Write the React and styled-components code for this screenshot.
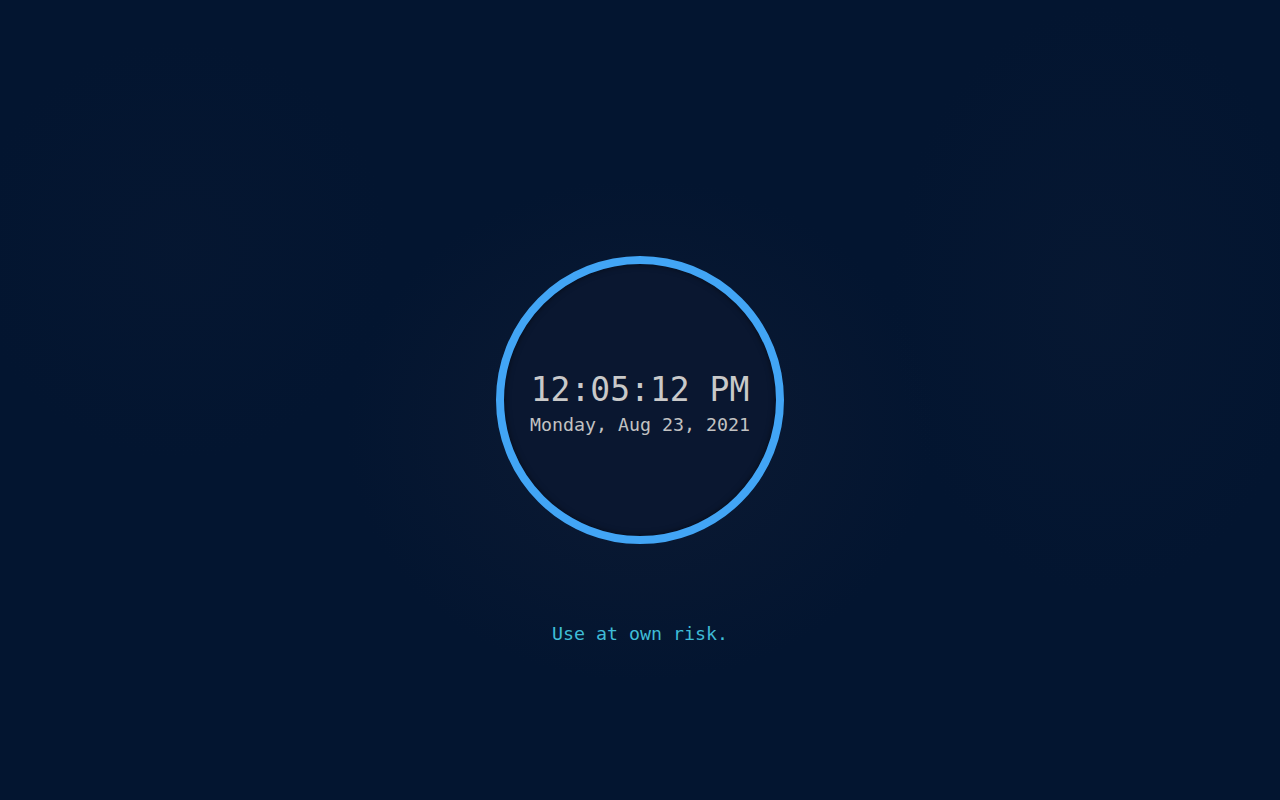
import React from "react";
import styled, { createGlobalStyle } from "styled-components";

const GlobalStyle = createGlobalStyle`
  html, body {
    margin: 0;
    padding: 0;
    height: 100%;
  }
  body {
    background: #041631;
    font-family: "DejaVu Sans Mono", "Liberation Mono", monospace;
  }
`;

const Page = styled.main`
  min-height: 100vh;
  display: grid;
  grid-template-rows: 1fr auto 1fr;
  justify-items: center;
  background:
    radial-gradient(ellipse 420px 360px at 640px 430px, rgba(16, 28, 52, 0.75), rgba(16, 28, 52, 0) 70%),
    radial-gradient(ellipse 300px 420px at 1100px 300px, rgba(10, 26, 52, 0.5), rgba(10, 26, 52, 0) 70%),
    radial-gradient(ellipse 300px 300px at 180px 250px, rgba(8, 24, 50, 0.5), rgba(8, 24, 50, 0) 70%),
    #031530;
`;

const Ring = styled.div`
  grid-row: 2;
  width: 288px;
  height: 288px;
  box-sizing: border-box;
  border-radius: 50%;
  border: 8px solid #42a5f5;
  background: #0a1730;
  box-shadow: inset 0 0 6px rgba(0, 0, 0, 0.55);
  display: flex;
  flex-direction: column;
  align-items: center;
  justify-content: center;
  padding-top: 8px;
`;

const Time = styled.div`
  color: #c9c9c9;
  font-size: 33px;
  line-height: 38px;
  white-space: nowrap;
`;

const DateLine = styled.div`
  color: #c2c2c2;
  font-size: 18.3px;
  line-height: 24px;
  margin-top: 4px;
  white-space: nowrap;
`;

const Footer = styled.footer`
  grid-row: 3;
  align-self: start;
  padding-top: 78px;
  color: #3fbcd6;
  font-size: 18.3px;
  line-height: 24px;
`;

export default function App() {
  return (
    <>
      <GlobalStyle />
      <Page>
        <Ring>
          <Time>12:05:12 PM</Time>
          <DateLine>Monday, Aug 23, 2021</DateLine>
        </Ring>
        <Footer>Use at own risk.</Footer>
      </Page>
    </>
  );
}
